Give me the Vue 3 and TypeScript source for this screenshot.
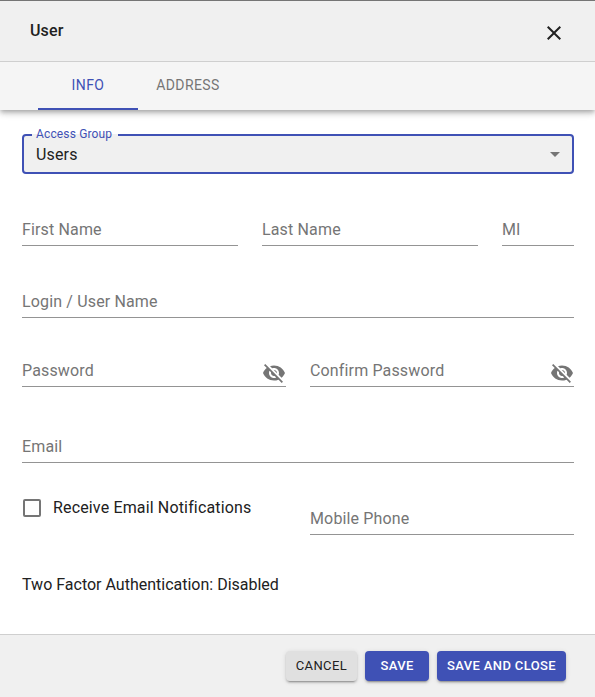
<script setup lang="ts">
import { reactive, ref } from 'vue'

type Tab = 'Info' | 'Address'

const tabs: Tab[] = ['Info', 'Address']
const activeTab = ref<Tab>('Info')

const user = reactive({
  group: 'Users',
  firstName: '',
  lastName: '',
  mi: '',
  login: '',
  password: '',
  confirm: '',
  email: '',
  notify: false,
  mobile: '',
})

const visible = reactive({ password: false, confirm: false })
</script>

<template>
  <form class="dialog" @submit.prevent>
    <header class="header">
      <h1 class="title">User</h1>
      <button type="button" class="icon-button close" aria-label="Close">
        <svg viewBox="0 0 24 24" width="24" height="24" fill="currentColor">
          <path d="M19 6.41L17.59 5 12 10.59 6.41 5 5 6.41 10.59 12 5 17.59 6.41 19 12 13.41 17.59 19 19 17.59 13.41 12z" />
        </svg>
      </button>
    </header>

    <nav class="tabs" role="tablist">
      <button
        v-for="tab in tabs"
        :key="tab"
        type="button"
        role="tab"
        class="tab"
        :class="{ active: tab === activeTab }"
        :aria-selected="tab === activeTab"
        @click="activeTab = tab"
      >{{ tab }}</button>
    </nav>

    <main class="content">
      <div class="select-field">
        <label class="select-label" for="group">Access Group</label>
        <select id="group" v-model="user.group" class="select">
          <option>Users</option>
        </select>
        <svg class="arrow" viewBox="0 0 24 24" width="24" height="24" fill="currentColor">
          <path d="M7 10l5 5 5-5z" />
        </svg>
      </div>

      <div class="row names">
        <input v-model="user.firstName" class="input" type="text" placeholder="First Name" aria-label="First Name" />
        <input v-model="user.lastName" class="input" type="text" placeholder="Last Name" aria-label="Last Name" />
        <input v-model="user.mi" class="input" type="text" placeholder="MI" aria-label="MI" />
      </div>

      <div class="row login">
        <input v-model="user.login" class="input" type="text" placeholder="Login / User Name" aria-label="Login / User Name" />
      </div>

      <div class="row halves passwords">
        <div class="secret">
          <input v-model="user.password" class="input bare" :type="visible.password ? 'text' : 'password'" placeholder="Password" aria-label="Password" />
          <button type="button" class="icon-button eye" aria-label="Toggle password visibility" @click="visible.password = !visible.password">
            <svg viewBox="0 0 24 24" width="24" height="24" fill="currentColor">
              <path d="M12 7c2.76 0 5 2.24 5 5 0 .65-.13 1.26-.36 1.83l2.92 2.92c1.51-1.26 2.7-2.89 3.43-4.75-1.73-4.39-6-7.5-11-7.5-1.4 0-2.74.25-3.98.7l2.16 2.16C10.74 7.13 11.35 7 12 7zM2 4.27l2.28 2.28.46.46C3.08 8.3 1.78 10.02 1 12c1.73 4.39 6 7.5 11 7.5 1.55 0 3.03-.3 4.38-.84l.42.42L19.73 22 21 20.73 3.27 3 2 4.27zM7.53 9.8l1.55 1.55c-.05.21-.08.43-.08.65 0 1.66 1.34 3 3 3 .22 0 .44-.03.65-.08l1.55 1.55c-.67.33-1.41.53-2.2.53-2.76 0-5-2.24-5-5 0-.79.2-1.53.53-2.2zm4.31-.78l3.15 3.15.02-.16c0-1.66-1.34-3-3-3l-.17.01z" />
            </svg>
          </button>
        </div>
        <div class="secret">
          <input v-model="user.confirm" class="input bare" :type="visible.confirm ? 'text' : 'password'" placeholder="Confirm Password" aria-label="Confirm Password" />
          <button type="button" class="icon-button eye" aria-label="Toggle confirmation visibility" @click="visible.confirm = !visible.confirm">
            <svg viewBox="0 0 24 24" width="24" height="24" fill="currentColor">
              <path d="M12 7c2.76 0 5 2.24 5 5 0 .65-.13 1.26-.36 1.83l2.92 2.92c1.51-1.26 2.7-2.89 3.43-4.75-1.73-4.39-6-7.5-11-7.5-1.4 0-2.74.25-3.98.7l2.16 2.16C10.74 7.13 11.35 7 12 7zM2 4.27l2.28 2.28.46.46C3.08 8.3 1.78 10.02 1 12c1.73 4.39 6 7.5 11 7.5 1.55 0 3.03-.3 4.38-.84l.42.42L19.73 22 21 20.73 3.27 3 2 4.27zM7.53 9.8l1.55 1.55c-.05.21-.08.43-.08.65 0 1.66 1.34 3 3 3 .22 0 .44-.03.65-.08l1.55 1.55c-.67.33-1.41.53-2.2.53-2.76 0-5-2.24-5-5 0-.79.2-1.53.53-2.2zm4.31-.78l3.15 3.15.02-.16c0-1.66-1.34-3-3-3l-.17.01z" />
            </svg>
          </button>
        </div>
      </div>

      <div class="row email">
        <input v-model="user.email" class="input" type="email" placeholder="Email" aria-label="Email" />
      </div>

      <div class="row halves contact">
        <label class="check">
          <input v-model="user.notify" class="checkbox" type="checkbox" />
          <span>Receive Email Notifications</span>
        </label>
        <input v-model="user.mobile" class="input mobile" type="tel" placeholder="Mobile Phone" aria-label="Mobile Phone" />
      </div>

      <p class="two-factor">Two Factor Authentication: Disabled</p>
    </main>

    <footer class="footer">
      <button type="button" class="button">Cancel</button>
      <button type="submit" class="button primary save">Save</button>
      <button type="submit" class="button primary">Save and Close</button>
    </footer>
  </form>
</template>

<style>
body {
  background: #fff;
}
</style>

<style scoped>
.dialog,
.dialog * {
  box-sizing: border-box;
}

.dialog {
  display: flex;
  flex-direction: column;
  min-height: 100vh;
  border-top: 1px solid #757575;
  background: #fff;
  color: #212121;
  font-family: Roboto, sans-serif;
  font-size: 16px;
  line-height: 24px;
  letter-spacing: 0.00938em;
}

button,
input,
select {
  margin: 0;
  padding: 0;
  border: 0;
  border-radius: 0;
  background: none;
  color: inherit;
  font: inherit;
  letter-spacing: inherit;
  outline: none;
}

button {
  cursor: pointer;
}

.header {
  position: relative;
  z-index: 1;
  display: flex;
  align-items: center;
  justify-content: space-between;
  height: 61px;
  padding: 0 29px 0 30px;
  border-bottom: 1px solid #cfcfcf;
  background: #f0f0f0;
}

.title {
  margin: 0;
  font-size: 16px;
  font-weight: 500;
}

.icon-button {
  display: flex;
  flex: none;
}

.close {
  padding-top: 4px;
}

.tabs {
  display: flex;
  height: 48px;
  padding: 0 38px;
  background: #f5f5f5;
  box-shadow: 0 2px 4px -1px rgba(0, 0, 0, 0.2), 0 4px 5px rgba(0, 0, 0, 0.14), 0 1px 10px rgba(0, 0, 0, 0.12);
}

.tab {
  width: 100px;
  border-bottom: 2px solid transparent;
  color: #757575;
  font-size: 14px;
  letter-spacing: 0.02857em;
  text-transform: uppercase;
}

.tab.active {
  border-bottom-color: #3f51b5;
  color: #3f51b5;
}

.content {
  flex: 1;
  padding: 24px 21px 32px 22px;
}

.select-field {
  position: relative;
}

.select {
  display: block;
  width: 100%;
  height: 40px;
  padding: 2px 32px 0 12px;
  border: 2px solid #3f51b5;
  border-radius: 4px;
  background: #f0f0f0;
  appearance: none;
}

.select-label {
  position: absolute;
  top: -8px;
  left: 10px;
  padding: 0 6px 0 4px;
  background: linear-gradient(#fff 8px, #f0f0f0 8px);
  color: #3f51b5;
  font-size: 12px;
  line-height: 16px;
}

.arrow {
  position: absolute;
  top: 8px;
  right: 7px;
  color: #757575;
  pointer-events: none;
}

.row {
  display: grid;
  gap: 24px;
}

.names {
  grid-template-columns: 3fr 3fr 1fr;
  margin-top: 40px;
}

.login {
  margin-top: 40px;
}

.halves {
  grid-template-columns: 1fr 1fr;
}

.passwords {
  margin-top: 37px;
}

.email {
  margin-top: 44px;
}

.contact {
  align-items: start;
  margin-top: 33px;
}

.input {
  width: 100%;
  min-width: 0;
  height: 32px;
  border-bottom: 1px solid #949494;
}

.input::placeholder {
  color: #757575;
  opacity: 1;
}

.secret {
  display: flex;
  height: 32px;
  border-bottom: 1px solid #949494;
}

.bare {
  flex: 1;
  height: 31px;
  border-bottom: 0;
}

.eye {
  align-items: flex-end;
  padding-bottom: 1px;
  color: #757575;
}

.mobile {
  margin-top: 7px;
}

.check {
  display: flex;
  align-items: center;
  gap: 12px;
  white-space: nowrap;
}

.checkbox {
  flex: none;
  width: 18px;
  height: 18px;
  margin-left: 1px;
  border: 2px solid #757575;
  border-radius: 2px;
  appearance: none;
}

.checkbox:checked {
  background: #3f51b5;
  border-color: #3f51b5;
}

.two-factor {
  margin: 38px 0 0;
  letter-spacing: normal;
}

.footer {
  display: flex;
  align-items: center;
  justify-content: flex-end;
  gap: 8px;
  height: 63px;
  padding: 0 29px;
  border-top: 1px solid #cfcfcf;
  background: #f0f0f0;
}

.button {
  height: 30px;
  padding: 0 10px;
  border-radius: 4px;
  background: #e0e0e0;
  box-shadow: 0 3px 1px -2px rgba(0, 0, 0, 0.2), 0 2px 2px rgba(0, 0, 0, 0.14), 0 1px 5px rgba(0, 0, 0, 0.12);
  font-size: 13px;
  letter-spacing: 0.02857em;
  text-transform: uppercase;
}

.primary {
  background: #3f51b5;
  color: #fff;
  font-weight: 500;
}

.save {
  min-width: 64px;
}
</style>
